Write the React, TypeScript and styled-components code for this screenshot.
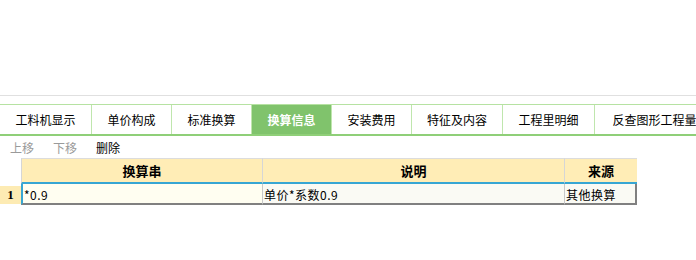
import styled, { createGlobalStyle } from 'styled-components';

const GlobalStyle = createGlobalStyle`
  body {
    margin: 0;
    background: #ffffff;
    font-family: "Noto Sans CJK SC", "Noto Sans", sans-serif;
    font-size: 12px;
    color: #000;
  }
`;

const Page = styled.div`
  width: 696px;
  height: 260px;
  overflow: hidden;
  display: flex;
  flex-direction: column;
`;

const TopSpace = styled.div`
  height: 95px;
  border-bottom: 1px solid #e0e0e0;
  margin-bottom: 8px;
`;

const TabBar = styled.div`
  display: flex;
  height: 29px;
  border-top: 1px solid #b6e2a2;
  border-bottom: 2px solid #8fcf78;
  white-space: nowrap;
`;

const Tab = styled.div<{ $w: number; $active?: boolean }>`
  flex: 0 0 ${(p) => p.$w}px;
  display: flex;
  align-items: center;
  justify-content: center;
  box-sizing: border-box;
  border-right: 1px solid #bfe6ad;
  font-size: 12px;
  background: ${(p) => (p.$active ? '#80c36c' : '#ffffff')};
  color: ${(p) => (p.$active ? '#ffffff' : '#000')};
  font-weight: ${(p) => (p.$active ? 700 : 400)};
`;

const Toolbar = styled.div`
  display: flex;
  align-items: center;
  gap: 19px;
  height: 22px;
  padding-left: 10px;
`;

const ToolButton = styled.span<{ $disabled?: boolean }>`
  font-size: 12px;
  color: ${(p) => (p.$disabled ? '#9a9a9a' : '#000')};
`;

const Grid = styled.div`
  display: grid;
  grid-template-columns: 21px 241px 302px 73px;
  width: 637px;
`;

const Corner = styled.div`
  height: 24px;
  background: #ffffff;
`;

const HeadCell = styled.div`
  height: 23px;
  box-sizing: content-box;
  border-top: 1px solid #dcdcdc;
  border-left: 1px solid #d6d6d6;
  border-bottom: 2px solid #37a6d3;
  background: #ffedb6;
  display: flex;
  align-items: center;
  justify-content: center;
  font-weight: 700;
  font-size: 13px;
`;

const RowNum = styled.div`
  height: 18px;
  margin-top: 2px;
  background: #fdebb3;
  display: flex;
  align-items: center;
  justify-content: center;
  font-weight: 700;
  font-family: "Liberation Serif", serif;
  font-size: 13px;
`;

const Cell = styled.div<{ $selected?: boolean; $last?: boolean }>`
  height: 17px;
  padding-top: 2px;
  box-sizing: content-box;
  border-left: ${(p) => (p.$selected ? '2px solid #37a6d3' : '1px solid #c8c8c8')};
  border-right: ${(p) => (p.$last ? '2px solid #808080' : '0')};
  border-bottom: 2px solid #808080;
  background: ${(p) => (p.$selected ? '#fffef1' : '#fafaf4')};
  display: flex;
  align-items: center;
  padding-left: 1px;
  font-size: 12px;
  line-height: 1;
  letter-spacing: 0.5px;
  white-space: nowrap;
`;

const tabs = [
  { label: '工料机显示', w: 92 },
  { label: '单价构成', w: 80 },
  { label: '标准换算', w: 80 },
  { label: '换算信息', w: 80, active: true },
  { label: '安装费用', w: 80 },
  { label: '特征及内容', w: 91 },
  { label: '工程里明细', w: 92 },
  { label: '反查图形工程量', w: 120 },
];

export default function App() {
  return (
    <Page>
      <GlobalStyle />
      <TopSpace />
      <TabBar>
        {tabs.map((t) => (
          <Tab key={t.label} $w={t.w} $active={t.active}>
            {t.label}
          </Tab>
        ))}
      </TabBar>
      <Toolbar>
        <ToolButton $disabled>上移</ToolButton>
        <ToolButton $disabled>下移</ToolButton>
        <ToolButton>删除</ToolButton>
      </Toolbar>
      <Grid>
        <Corner />
        <HeadCell>换算串</HeadCell>
        <HeadCell>说明</HeadCell>
        <HeadCell>来源</HeadCell>
        <RowNum>1</RowNum>
        <Cell $selected>*0.9</Cell>
        <Cell>单价*系数0.9</Cell>
        <Cell $last>其他换算</Cell>
      </Grid>
    </Page>
  );
}
